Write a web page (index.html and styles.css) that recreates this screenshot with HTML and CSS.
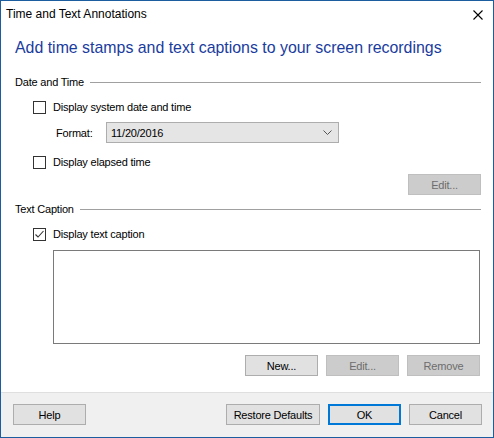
FILE: index.html
```html
<!DOCTYPE html>
<html>
<head>
<meta charset="utf-8">
<link rel="stylesheet" href="styles.css">
</head>
<body>
<div class="window">
  <div class="titlebar">
    <span class="title">Time and Text Annotations</span>
    <svg class="close" width="10" height="10" viewBox="0 0 10 10"><path d="M0.5 0.5 L9.5 9.5 M9.5 0.5 L0.5 9.5" stroke="#000" stroke-width="1.1" fill="none"/></svg>
  </div>
  <div class="content">
    <div class="heading">Add time stamps and text captions to your screen recordings</div>

    <div class="group group-date"><span class="group-label">Date and Time</span><span class="group-line"></span></div>
    <label class="check-row row1"><span class="box"></span><span>Display system date and time</span></label>
    <div class="format-row">
      <span class="format-label">Format:</span>
      <div class="combo"><span>11/20/2016</span>
        <svg class="chev" width="9" height="5" viewBox="0 0 9 5"><path d="M0.5 0.5 L4.5 4.5 L8.5 0.5" stroke="#555" stroke-width="1" fill="none"/></svg>
      </div>
    </div>
    <label class="check-row row2"><span class="box"></span><span>Display elapsed time</span></label>
    <div class="right-row edit-row"><button class="btn disabled">Edit...</button></div>

    <div class="group group-caption"><span class="group-label">Text Caption</span><span class="group-line"></span></div>
    <label class="check-row row3"><span class="box checked"><svg width="11" height="11" viewBox="0 0 11 11"><path d="M1.5 5.5 L4 8 L9.5 2" stroke="#333" stroke-width="1.1" fill="none"/></svg></span><span>Display text caption</span></label>
    <div class="textbox"></div>
    <div class="right-row caption-buttons">
      <button class="btn">New...</button>
      <button class="btn disabled">Edit...</button>
      <button class="btn disabled">Remove</button>
    </div>
  </div>
  <div class="footer">
    <button class="btn">Help</button>
    <div class="footer-right">
      <button class="btn wide">Restore Defaults</button>
      <button class="btn default">OK</button>
      <button class="btn">Cancel</button>
    </div>
  </div>
</div>
</body>
</html>
```

FILE: styles.css
```css
* { box-sizing: border-box; }
html, body { margin: 0; padding: 0; background: #fff; }
body { font-family: "Liberation Sans", Arial, sans-serif; font-size: 11px; letter-spacing: -0.2px; color: #000; }

.window {
  width: 494px;
  height: 438px;
  border: 1px solid #1b5d9e;
  display: flex;
  flex-direction: column;
  background: #fff;
}

.titlebar {
  height: 29px;
  display: flex;
  align-items: center;
  justify-content: space-between;
  padding: 0 10px 0 5px;
}
.title { font-size: 12px; letter-spacing: 0; line-height: 14px; margin-top: -3px; }
.close { margin-top: -2px; }

.content {
  flex: 1;
  padding: 0 12px 0 14px;
  display: flex;
  flex-direction: column;
}

.heading {
  margin-top: 8px;
  height: 20px;
  line-height: 20px;
  font-size: 15.9px;
  letter-spacing: 0;
  color: #1a3c9e;
  white-space: nowrap;
}

.group {
  display: flex;
  align-items: center;
  height: 16px;
  line-height: 16px;
}
.group-date { margin-top: 16px; }
.group-caption { margin-top: 6px; }
.group-label { white-space: nowrap; }
.group-line { flex: 1; height: 1px; background: #a0a0a0; margin-left: 6px; }

.check-row {
  display: flex;
  align-items: center;
  height: 20px;
  padding-left: 18px;
  gap: 7px;
}
.row1 { margin-top: 7px; }
.row2 { margin-top: 9px; }
.row3 { margin-top: 7px; }

.box {
  width: 13px;
  height: 13px;
  border: 1px solid #333;
  background: #fff;
  display: flex;
  align-items: center;
  justify-content: center;
}

.format-row {
  margin-top: 5px;
  display: flex;
  align-items: center;
  height: 21px;
  padding-left: 41px;
}
.format-label { width: 50px; }
.combo {
  width: 233px;
  height: 21px;
  background: #e5e5e5;
  border: 1px solid #adadad;
  display: flex;
  align-items: center;
  justify-content: space-between;
  padding: 0 6px 0 4px;
}

.right-row {
  display: flex;
  justify-content: flex-end;
  gap: 8px;
}
.edit-row { margin-top: 2px; }
.caption-buttons { margin-top: 11px; padding-right: 1px; }

.btn {
  width: 73px;
  height: 21px;
  padding: 0;
  font-family: inherit;
  font-size: 11px;
  letter-spacing: -0.2px;
  color: #000;
  background: #e1e1e1;
  border: 1px solid #adadad;
  border-radius: 0;
}
.btn.disabled { background: #cccccc; border-color: #bfbfbf; color: #6d6d6d; }
.btn.wide { width: 94px; }
.btn.default { border: 2px solid #0078d7; }

.textbox {
  margin-top: 6px;
  margin-left: 38px;
  margin-right: 1px;
  height: 94px;
  border: 1px solid #7a7a7a;
  background: #fff;
}

.footer {
  height: 45px;
  background: #f0f0f0;
  border-top: 1px solid #dfdfdf;
  display: flex;
  justify-content: space-between;
  align-items: flex-start;
  padding: 11px 11px 0 12px;
}
.footer-right { display: flex; gap: 8px; }
```
